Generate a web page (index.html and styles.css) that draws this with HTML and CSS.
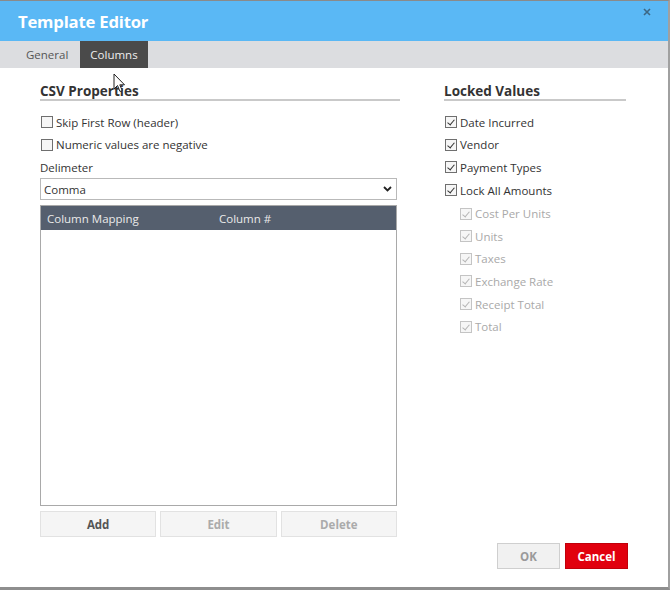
FILE: index.html
```html
<!DOCTYPE html>
<html lang="en">
<head>
    <meta charset="UTF-8">
    <title>Template Editor</title>
    <link rel="stylesheet" href="styles.css">
</head>
<body>

<div class="dialog">

    <header class="titlebar">
        <h1>Template Editor</h1>
        <svg class="close" width="8" height="8" viewBox="0 0 8 8">
            <path d="M1 1 L7 7 M7 1 L1 7" stroke="#3d6784" stroke-width="1.6" fill="none"/>
        </svg>
    </header>

    <nav class="tabs">
        <span class="tab">General</span>
        <span class="tab active">Columns</span>
    </nav>

    <main class="content">

        <section class="csv">
            <h2>CSV Properties</h2>
            <label class="check"><span class="box"></span>Skip First Row (header)</label>
            <label class="check"><span class="box"></span>Numeric values are negative</label>
            <div class="field-label">Delimeter</div>
            <div class="select">
                <span>Comma</span>
                <svg width="9" height="6" viewBox="0 0 9 6">
                    <path d="M1 1 L4.5 4.5 L8 1" stroke="#222" stroke-width="1.8" fill="none"/>
                </svg>
            </div>
            <div class="grid">
                <div class="grid-head">
                    <span class="col-map">Column Mapping</span>
                    <span>Column #</span>
                </div>
                <div class="grid-body"></div>
            </div>
            <div class="grid-buttons">
                <button class="btn">Add</button>
                <button class="btn disabled">Edit</button>
                <button class="btn disabled">Delete</button>
            </div>
        </section>

        <section class="locked">
            <h2>Locked Values</h2>
            <label class="check"><span class="box checked"></span>Date Incurred</label>
            <label class="check"><span class="box checked"></span>Vendor</label>
            <label class="check"><span class="box checked"></span>Payment Types</label>
            <label class="check"><span class="box checked"></span>Lock All Amounts</label>
            <div class="sub">
                <label class="check off"><span class="box checked"></span>Cost Per Units</label>
                <label class="check off"><span class="box checked"></span>Units</label>
                <label class="check off"><span class="box checked"></span>Taxes</label>
                <label class="check off"><span class="box checked"></span>Exchange Rate</label>
                <label class="check off"><span class="box checked"></span>Receipt Total</label>
                <label class="check off"><span class="box checked"></span>Total</label>
            </div>
        </section>

    </main>

    <footer class="footer">
        <button class="btn-ok">OK</button>
        <button class="btn-cancel">Cancel</button>
    </footer>

</div>

<svg class="cursor" width="13" height="21" viewBox="0 0 13 21">
    <path d="M1 1 L1 16 L4.5 12.5 L7 18.5 L9.2 17.5 L6.8 11.8 L11.5 11.8 Z" fill="#fff" stroke="#222" stroke-width="1"/>
</svg>

</body>
</html>
```

FILE: styles.css
```css
* {
    box-sizing: border-box;
}
body {
    margin:      0;
    width:       670px;
    height:      590px;
    background:  #fff;
    font-family: "Open Sans", "Noto Sans", sans-serif;
    font-size:   11.5px;
    color:       #333;
    position:    relative;
}

.dialog {
    height:        590px;
    display:       flex;
    flex-direction: column;
    border-top:    1px solid #8a8a8a;
    border-right:  2px solid #a0a0a0;
    border-bottom: 3px solid #8e8e8e;
}

/* title bar */
.titlebar {
    height:      40px;
    background:  #5ab8f5;
    display:     flex;
    align-items: center;
    justify-content: space-between;
    padding:     0 17px 0 18px;
}
.titlebar h1 {
    margin:      0;
    font-size:   16.7px;
    font-weight: 700;
    color:       #fff;
    letter-spacing: -0.2px;
    padding-top: 1px;
}
.titlebar .close {
    align-self:  flex-start;
    margin-top:  7px;
}

/* tabs */
.tabs {
    height:      27px;
    background:  #dcdde0;
    display:     flex;
    padding-left: 14px;
}
.tab {
    display:     flex;
    align-items: center;
    padding:     0 12px;
    color:       #555;
    font-size:   11.5px;
}
.tab.active {
    background:  #4a4a4a;
    color:       #eee;
    padding:     0 10px;
}

/* content */
.content {
    display:     flex;
    gap:         44px;
    padding:     16px 0 0 40px;
}
h2 {
    margin:      0 0 10px 0;
    font-size:   13.5px;
    font-weight: 700;
    line-height: 15px;
    color:       #333;
    border-bottom: 2px solid #c9c9c9;
}
.csv {
    width:       360px;
}
.locked {
    width:       182px;
}

.check {
    height:      22.6px;
    display:     flex;
    align-items: center;
    gap:         3px;
    padding-left: 1px;
}
.check.off {
    color:       #a9a9a9;
}
.box {
    width:       12px;
    height:      12px;
    border:      1px solid #6f6f6f;
    background:  #f6f6f6;
    position:    relative;
}
.check.off .box {
    border-color: #c4c4c4;
}
.box.checked::after { /* the tick */
    content:     '';
    position:    absolute;
    left:        3px;
    top:         1px;
    width:       3px;
    height:      6px;
    border-right:  1.5px solid #333;
    border-bottom: 1.5px solid #333;
    transform:   rotate(40deg);
}
.check.off .box.checked::after {
    border-color: #b5b5b5;
}
.sub {
    padding-left: 15px;
    margin-top:  1px;
}

.field-label {
    height:      22px;
    display:     flex;
    align-items: center;
}
.select {
    width:       357px;
    height:      22px;
    border:      1px solid #b9b9b9;
    display:     flex;
    align-items: center;
    justify-content: space-between;
    padding:     0 4px 0 3px;
}

.grid {
    width:       357px;
    margin-top:  5px;
    border:      1px solid #a9a9a9;
}
.grid-head {
    height:      24px;
    background:  #555f6e;
    color:       #eaeaea;
    display:     flex;
    align-items: center;
    padding-left: 6px;
}
.col-map {
    width:       172px;
}
.grid-body {
    height:      275px;
}

.grid-buttons {
    width:       357px;
    display:     flex;
    gap:         4px;
    margin-top:  5px;
}
button {
    font-family: inherit;
    font-weight: 700;
    font-size:   11.5px;
    cursor:      pointer;
}
.btn {
    flex:        1;
    height:      26px;
    background:  #f5f5f5;
    border:      1px solid #e2e2e2;
    color:       #555;
}
.btn.disabled {
    color:       #ababab;
}

/* dialog buttons */
.footer {
    margin-top:  auto;
    display:     flex;
    justify-content: flex-end;
    gap:         5px;
    padding:     0 40px 18px 0;
}
.footer button {
    width:       63px;
    height:      26px;
}
.btn-ok {
    background:  #f1f1f1;
    border:      1px solid #cfcfcf;
    color:       #9a9a9a;
}
.btn-cancel {
    background:  #e1000e;
    border:      1px solid #c0000a;
    color:       #fff;
}

.cursor { /* mouse pointer caught in the shot */
    position:    absolute;
    left:        113px;
    top:         73px;
}
```
